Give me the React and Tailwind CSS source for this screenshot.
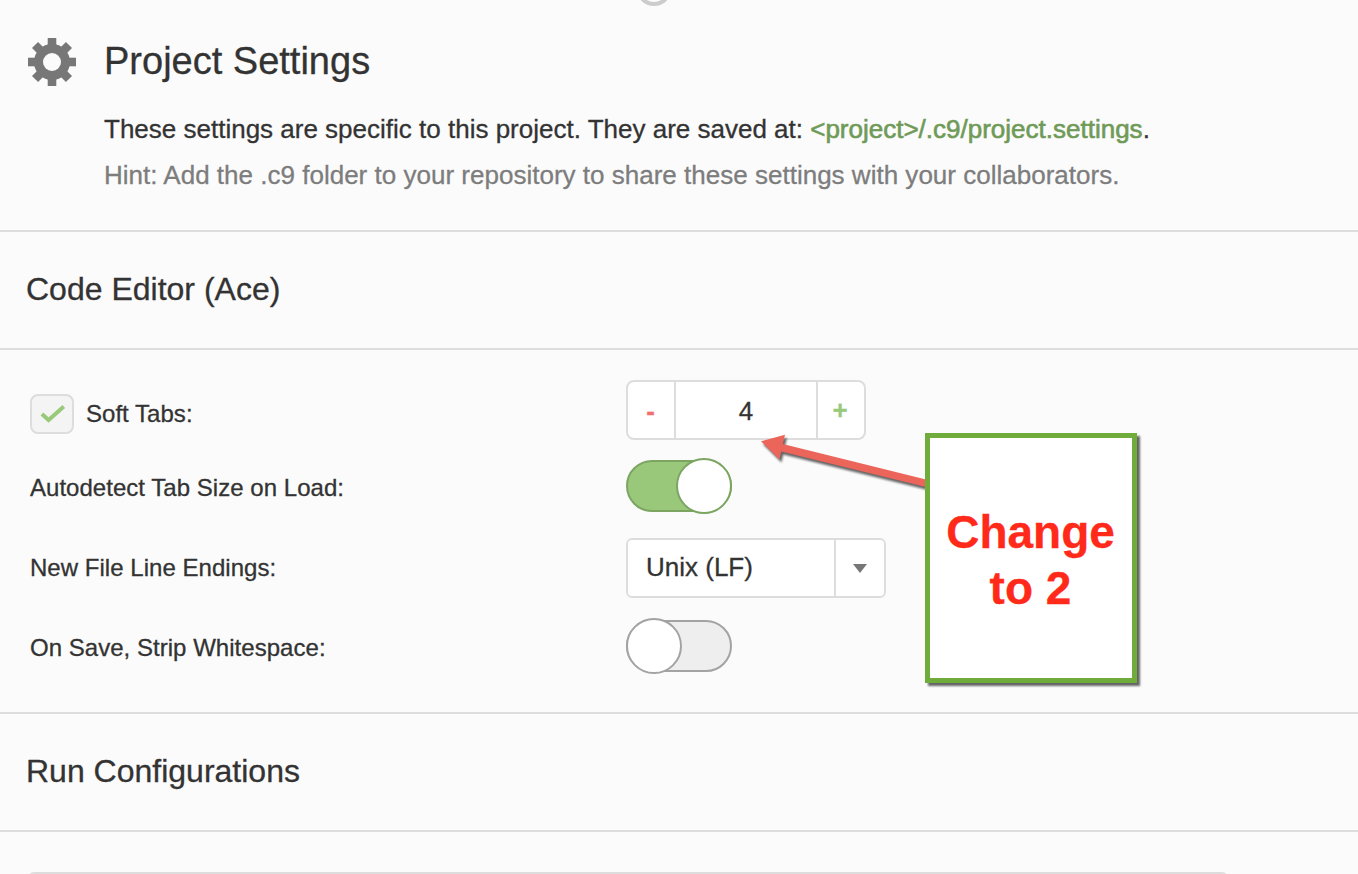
function GearIcon() {
  const teeth = [0, 45, 90, 135];
  return (
    <svg className="size-12 shrink-0" viewBox="0 0 48 48" fill="#777777">
      <defs>
        <mask id="gear-hole">
          <rect width="48" height="48" fill="white" />
          <circle cx="24" cy="24" r="9" fill="black" />
        </mask>
      </defs>
      <g mask="url(#gear-hole)">
        <circle cx="24" cy="24" r="18" />
        {teeth.map((angle) => (
          <rect key={angle} x="19.7" y="0" width="8.6" height="48" transform={`rotate(${angle} 24 24)`} />
        ))}
      </g>
    </svg>
  );
}

function SectionHeading({ children }) {
  return (
    <h2 className="flex h-[118px] items-center border-b-2 border-[#dddddd] pb-0.5 pl-[26px] text-[32px] leading-none">
      {children}
    </h2>
  );
}

function Row({ label, className, children }) {
  return (
    <div className={`flex items-center ${className}`}>
      <div className="flex w-[596px] items-center gap-3 text-2xl leading-7 tracking-[0.03px]">{label}</div>
      {children}
    </div>
  );
}

function Checkbox() {
  return (
    <span className="flex h-10 w-11 items-center justify-center rounded-lg border-2 border-[#dddddd] bg-[#f4f4f4]">
      <svg className="h-9 w-10" viewBox="0 0 40 36" fill="none" stroke="#99c97b" strokeWidth="4">
        <path d="M9.9 17.9 L16.6 24 L31.8 10.6" />
      </svg>
    </span>
  );
}

function Toggle({ on }) {
  return on ? (
    <div className="flex h-14 w-[106px] items-center">
      <div className="flex h-[52px] w-full items-center justify-end rounded-full border-2 border-[#7ba561] bg-[#99c87b]">
        <div className="-mr-0.5 size-14 shrink-0 rounded-full border-2 border-[#7ba561] bg-white" />
      </div>
    </div>
  ) : (
    <div className="flex h-14 w-[106px] items-center">
      <div className="flex h-[52px] w-full items-center rounded-full border-2 border-[#a3a3a3] bg-[#eeeeee]">
        <div className="-ml-0.5 size-14 shrink-0 rounded-full border-2 border-[#a3a3a3] bg-white" />
      </div>
    </div>
  );
}

function Spinner() {
  return (
    <div className="flex h-[60px] w-60 rounded-lg border-2 border-[#dddddd] bg-white text-[26px] leading-none">
      <div className="flex w-[46px] items-center justify-center pr-px pt-px font-bold text-[#f07070]">-</div>
      <div className="flex flex-1 items-center justify-center border-x-2 border-[#dddddd] pt-0.5">4</div>
      <div className="flex w-[46px] items-center justify-center pr-0.5 font-bold text-[#99c97b]">+</div>
    </div>
  );
}

function Select() {
  return (
    <div className="flex h-[60px] w-[260px] rounded-md border-2 border-[#dddddd] bg-white text-[26px] leading-none">
      <div className="flex flex-1 items-center pb-0.5 pl-[18px]">Unix (LF)</div>
      <div className="flex w-[50px] items-center justify-center border-l-2 border-[#dddddd]">
        <svg className="h-[9px] w-3.5" viewBox="0 0 14 9" fill="#777777">
          <path d="M0 0 H14 L7 9 Z" />
        </svg>
      </div>
    </div>
  );
}

export default function App() {
  return (
    <main className="relative h-[874px] w-[1358px] overflow-hidden bg-[#fbfbfb] font-['Liberation_Sans',Arial,sans-serif] text-[#333333] [-webkit-text-stroke:0.3px]">
      <header className="flex h-[232px] gap-7 border-b-2 border-[#dddddd] pt-[38px] pl-7">
        <GearIcon />
        <div>
          <h1 className="mt-[3px] text-[38px] leading-10">Project Settings</h1>
          <p className="mt-[25px] text-[26px] leading-[46px] whitespace-nowrap">
            These settings are specific to this project. They are saved at:{" "}
            <span className="text-[#6f9a57] [-webkit-text-stroke:0.6px]">&lt;project&gt;/.c9/project.settings</span>.
          </p>
          <p className="text-[26px] leading-[46px] tracking-[0.01px] whitespace-nowrap text-[#7d7d7d]">
            Hint: Add the .c9 folder to your repository to share these settings with your collaborators.
          </p>
        </div>
      </header>

      <SectionHeading>Code Editor (Ace)</SectionHeading>
      <section className="h-[364px] border-b-2 border-[#dddddd] pt-[30px] pl-[30px]">
        <Row
          className="h-[60px]"
          label={
            <>
              <span className="mt-2">
                <Checkbox />
              </span>
              <span className="pt-[7px]">Soft Tabs:</span>
            </>
          }
        >
          <Spinner />
        </Row>
        <Row className="mt-[18px] h-14" label={<span className="pt-[3px]">Autodetect Tab Size on Load:</span>}>
          <Toggle on />
        </Row>
        <Row className="mt-6 h-[60px]" label={<span className="pb-px">New File Line Endings:</span>}>
          <Select />
        </Row>
        <Row className="mt-5 h-14" label={<span className="pt-[3px]">On Save, Strip Whitespace:</span>}>
          <Toggle />
        </Row>
      </section>

      <SectionHeading>Run Configurations</SectionHeading>
      <section className="pt-10 pl-7">
        <div className="h-20 w-[1200px] rounded-md border-2 border-[#dddddd]" />
      </section>

      <svg className="absolute top-0 left-[634px] h-2 w-10" viewBox="0 0 40 8" fill="none">
        <circle cx="20" cy="-12" r="16" stroke="#cccccc" strokeWidth="4" />
      </svg>

      <svg
        className="absolute top-[425px] left-[750px] h-20 w-[190px] drop-shadow-[2px_3px_1px_rgba(0,0,0,0.6)]"
        viewBox="750 425 190 80"
        fill="#ec655a"
      >
        <path d="M761 441.3 L785 434.8 L782.8 444 L930 480.4 L930 488 L781.2 451.5 L779.5 459.6 Z" />
      </svg>
      <div className="absolute top-[433px] left-[925px] flex h-[250px] w-[212px] items-center justify-center border-5 border-[#70ac3b] bg-white pt-1 pr-px text-center text-[46px] leading-14 font-bold text-[#ff2a1a] shadow-[3px_3px_2px_rgba(0,0,0,0.6)]">
        <span>
          Change
          <br />
          to 2
        </span>
      </div>
    </main>
  );
}
